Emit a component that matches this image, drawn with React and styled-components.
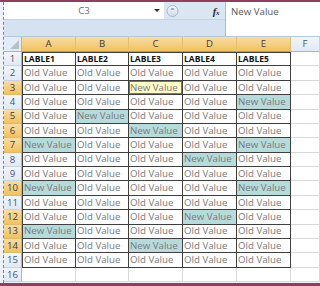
import React from "react";
import styled, { createGlobalStyle, css } from "styled-components";

const GlobalStyle = createGlobalStyle`
  html, body { margin: 0; padding: 0; background: #ffffff; }
  * { box-sizing: border-box; }
`;

const Frame = styled.div`
  width: 320px;
  height: 286px;
  border-top: 2px solid #8e3f5e;
  border-bottom: 3px solid #8e3f5e;
  background: #eef2f8;
  padding-left: 3px;
  overflow: hidden;
  position: relative;
  font-family: "Open Sans", "Liberation Sans", sans-serif;
`;

const Inner = styled.div`
  height: 100%;
  border-left: 1px dashed #6f84a8;
  display: flex;
  flex-direction: column;
`;

const FormulaBar = styled.div`
  height: 35px;
  flex: none;
  display: flex;
  background: #dbe6f3;
  border-bottom: 1px solid #b7c7dc;
`;

const LeftPart = styled.div`
  width: 221px;
  display: flex;
  flex-direction: column;
`;

const TopRow = styled.div`
  height: 18px;
  display: flex;
  align-items: stretch;
  border-bottom: 1px solid #c5d3e6;
`;

const NameBox = styled.div`
  width: 160px;
  background: #ffffff;
  position: relative;
  display: flex;
  align-items: center;
  justify-content: center;
  color: #6e6e6e;
  font-size: 9.6px;
`;

const DropArrow = styled.span`
  position: absolute;
  right: 4px;
  top: 7px;
  width: 0;
  height: 0;
  border-left: 3px solid transparent;
  border-right: 3px solid transparent;
  border-top: 3px solid #333;
`;

const ButtonArea = styled.div`
  flex: 1;
  display: flex;
  align-items: center;
  padding-left: 2px;
  justify-content: space-between;
  padding-right: 6px;
`;

const Fx = styled.span`
  font-family: "Liberation Serif", serif;
  font-style: italic;
  font-weight: bold;
  font-size: 11px;
  color: #2a2a2a;
  letter-spacing: -0.5px;
  sub {
    font-size: 7px;
    vertical-align: baseline;
  }
`;

const BottomBand = styled.div`
  flex: 1;
  background: #d6e2f1;
`;

const FormulaInput = styled.div`
  flex: 1;
  background: #ffffff;
  border-left: 1px solid #a9bdd6;
  padding: 3px 0 0 5px;
  color: #5a5a5a;
  font-size: 9.7px;
  line-height: 14px;
`;

const Sheet = styled.div`
  flex: none;
  display: grid;
  grid-template-columns: 18px 54px 53px 54px 54px 54px 1fr;
  grid-template-rows: 15px repeat(16, 14.375px);
  background: #ffffff;
`;

const orange = css`
  background: linear-gradient(#f9dca6, #f1c25e);
  color: #3d3d3d;
`;
const blue = css`
  background: linear-gradient(#f1f5fb, #e1e9f4);
  color: #4a5566;
`;

const Corner = styled.div`
  background: #e4ecf7;
  border-right: 1px solid #9eb6ce;
  border-bottom: 1px solid #9eb6ce;
  position: relative;
  &::after {
    content: "";
    position: absolute;
    right: 2px;
    bottom: 2px;
    width: 0;
    height: 0;
    border-left: 9px solid transparent;
    border-bottom: 9px solid #b3bfcd;
  }
`;

const ColHead = styled.div`
  ${(p) => (p.$active ? orange : blue)};
  border-right: 1px solid ${(p) => (p.$active ? "#e6bf6e" : "#c5d3e3")};
  border-bottom: 1px solid ${(p) => (p.$active ? "#c79b43" : "#9eb6ce")};
  display: flex;
  align-items: center;
  justify-content: center;
  font-size: 9.6px;
  line-height: 1;
`;

const RowHead = styled.div`
  ${(p) => (p.$active ? orange : blue)};
  border-right: 1px solid #9eb6ce;
  border-bottom: 1px solid ${(p) => (p.$active ? "#e2b86a" : "#c5d3e3")};
  display: flex;
  align-items: center;
  justify-content: center;
  font-size: 9.6px;
  line-height: 1;
`;

const fills = {
  teal: "#b7dadb",
  yellow: "#fefcc8",
};

const Cell = styled.div`
  background: ${(p) => (p.$fill ? fills[p.$fill] : "#ffffff")};
  border-right: 1px solid ${(p) => (p.$dark ? "#3f3f3f" : "#d9d9d9")};
  border-bottom: 1px solid ${(p) => (p.$dark ? "#3f3f3f" : "#d9d9d9")};
  border-left: ${(p) => (p.$left ? "1px solid #3f3f3f" : "none")};
  border-top: ${(p) => (p.$top ? "1px solid #3f3f3f" : "none")};
  box-shadow: ${(p) => (p.$active ? "inset 0 0 0 1px #7a7a4a" : "none")};
  display: flex;
  align-items: center;
  padding-left: 1px;
  white-space: nowrap;
  overflow: hidden;
  font-size: ${(p) => (p.$bold ? "8.5px" : "9.7px")};
  font-weight: ${(p) => (p.$bold ? 700 : 400)};
  color: ${(p) => (p.$bold ? "#111" : "#7b7b7b")};
  line-height: 1;
`;

const COLS = ["A", "B", "C", "D", "E", "F"];
const NEW = {
  3: ["C"],
  4: ["E"],
  5: ["B"],
  6: ["C"],
  7: ["A", "E"],
  8: ["D"],
  10: ["A", "E"],
  12: ["D"],
  13: ["A"],
  14: ["C"],
};
const ORANGE_ROWS = [3, 5, 6, 7, 10, 12, 13, 14];

export default function App() {
  const rows = [];
  for (let r = 1; r <= 16; r++) {
    rows.push(
      <RowHead key={"h" + r} $active={ORANGE_ROWS.includes(r)}>
        {r}
      </RowHead>
    );
    COLS.forEach((c, ci) => {
      const inTable = r <= 15 && ci < 5;
      let text = "";
      let fill;
      if (inTable) {
        if (r === 1) text = "LABLE" + (ci + 1);
        else if ((NEW[r] || []).includes(c)) {
          text = "New Value";
          fill = r === 3 && c === "C" ? "yellow" : "teal";
        } else text = "Old Value";
      }
      rows.push(
        <Cell
          key={c + r}
          $dark={inTable}
          $left={inTable && ci === 0}
          $top={inTable && r === 1}
          $bold={r === 1}
          $fill={fill}
          $active={r === 3 && c === "C"}
        >
          {text}
        </Cell>
      );
    });
  }

  return (
    <>
      <GlobalStyle />
      <Frame>
        <Inner>
          <FormulaBar>
            <LeftPart>
              <TopRow>
                <NameBox>
                  C3
                  <DropArrow />
                </NameBox>
                <ButtonArea>
                  <svg width="13" height="16" viewBox="0 0 13 16">
                    <defs>
                      <linearGradient id="btn" x1="0" y1="0" x2="0" y2="1">
                        <stop offset="0" stopColor="#f4f7fb" />
                        <stop offset="1" stopColor="#cfdbea" />
                      </linearGradient>
                    </defs>
                    <circle cx="6.5" cy="8" r="5.5" fill="url(#btn)" stroke="#a8b9cf" strokeWidth="1" />
                    <ellipse cx="6.5" cy="6" rx="2" ry="1" fill="#9aa9bd" />
                  </svg>
                  <Fx>
                    f<sub>x</sub>
                  </Fx>
                </ButtonArea>
              </TopRow>
              <BottomBand />
            </LeftPart>
            <FormulaInput>New Value</FormulaInput>
          </FormulaBar>
          <Sheet>
            <Corner />
            {COLS.map((c) => (
              <ColHead key={c} $active={c !== "F"}>
                {c}
              </ColHead>
            ))}
            {rows}
          </Sheet>
        </Inner>
      </Frame>
    </>
  );
}
